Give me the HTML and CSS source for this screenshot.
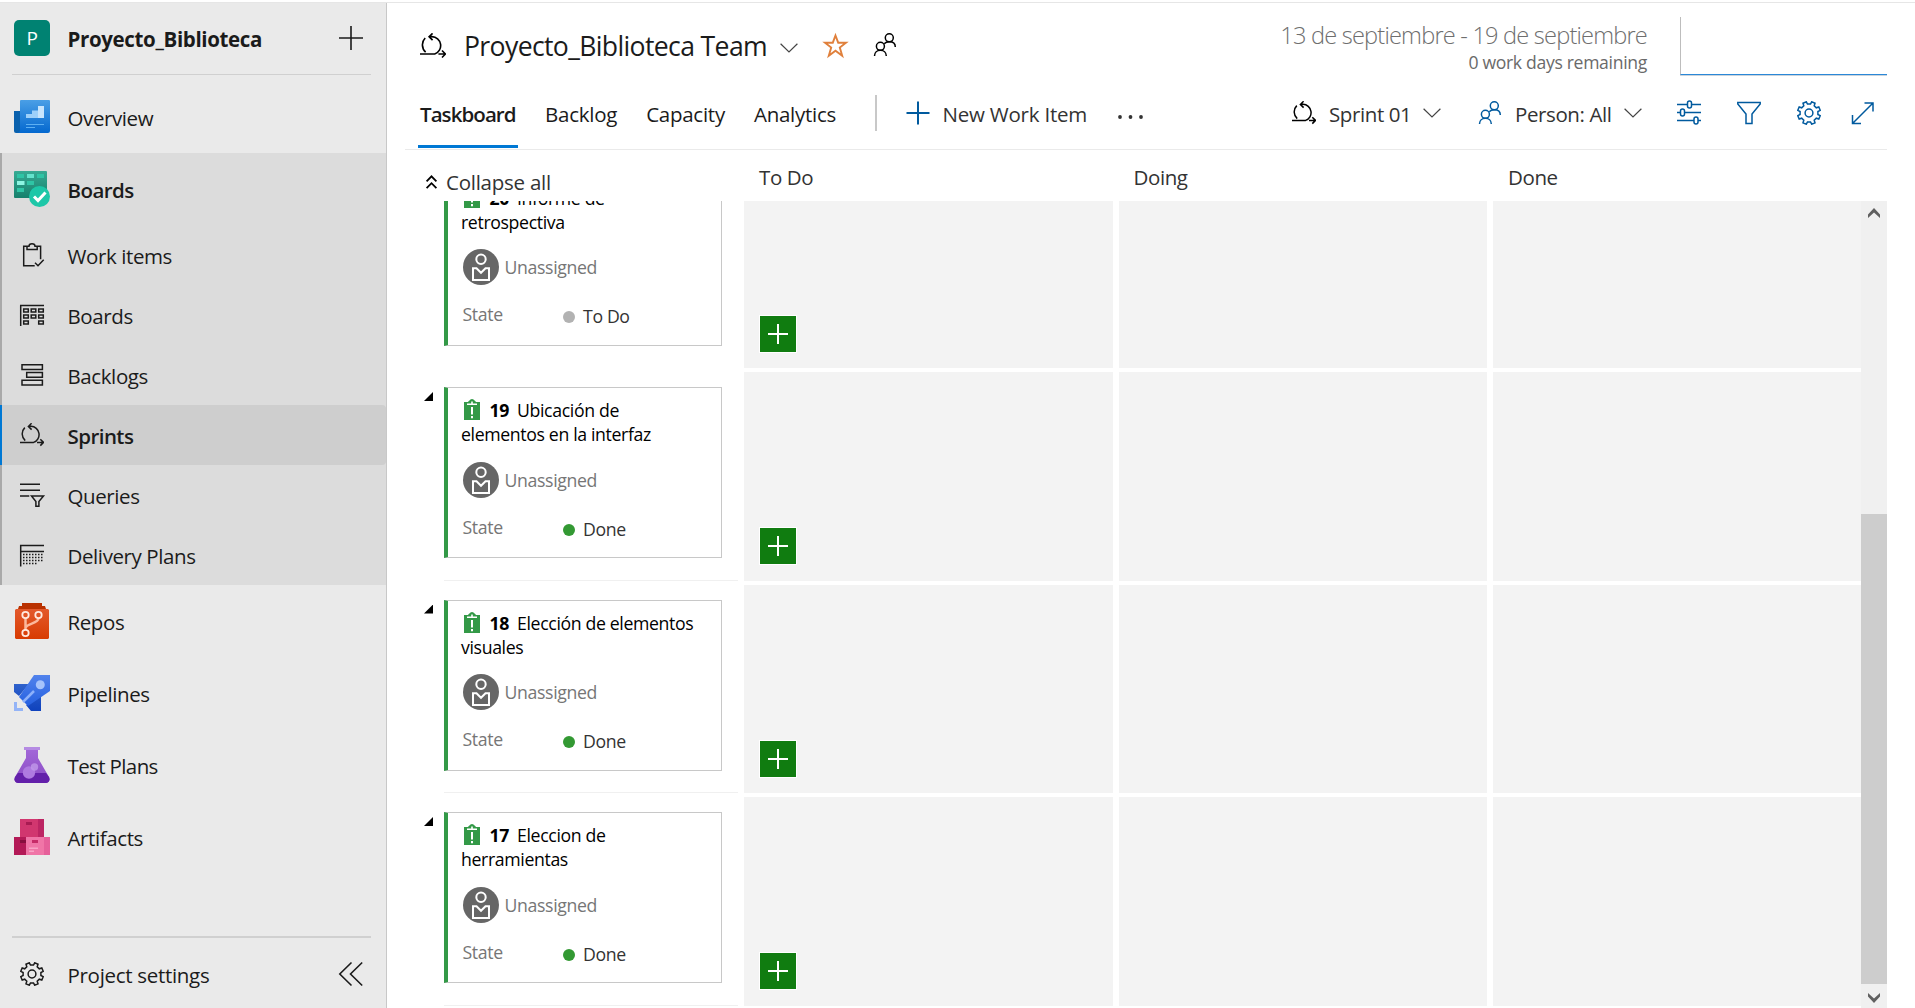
FILE: index.html
```html
<!DOCTYPE html>
<html lang="es">
<head>
<meta charset="utf-8">
<title>Proyecto_Biblioteca Team Taskboard</title>
<link rel="stylesheet" href="styles.css">
</head>
<body>
<svg class="defs" aria-hidden="true">
  <defs>
    <symbol id="i-sprint" viewBox="0 0 24 24"><path d="M4.8 4.6A9 9 0 0 0 5.2 17.6M8.6 3.3H11A8.3 8.3 0 0 1 13.6 19.4H0M11.6.3 8.4 3.4l3.2 3.2M17 19.4h6.3M20.3 16.2l3.2 3.2-3.2 3.2"/></symbol>
    <symbol id="i-people" viewBox="0 0 24 24"><circle cx="16.3" cy="4.8" r="4"/><circle cx="7.4" cy="13.3" r="4"/><path d="M1.5 23c0-3.6 2.7-5.7 5.9-5.7s5.9 2.1 5.9 5.7M11.2 10.8c1.2-1.3 2.9-2 5.1-2 3.500 0 6 2 6 5.200"/></symbol>
    <symbol id="i-gear" viewBox="0 0 24 24"><path d="M20.9 13.500 23.200 14.700 21.800 18 19.300 17.200 17.200 19.300 18 21.800 14.700 23.200 13.500 20.900 10.500 20.900 9.300 23.200 6 21.800 6.800 19.300 4.700 17.200 2.200 18 .8 14.700 3.100 13.500 3.100 10.500 .8 9.300 2.200 6 4.700 6.800 6.800 4.700 6 2.200 9.300 .8 10.500 3.100 13.500 3.100 14.700 .8 18 2.200 17.200 4.700 19.300 6.800 21.800 6 23.200 9.300 20.900 10.500Z"/><circle cx="12" cy="12" r="3.900"/></symbol>
    <symbol id="i-chevron" viewBox="0 0 18 10"><path d="m.6.8 8.400 8.200L17.400.8"/></symbol>
    <symbol id="i-task" viewBox="0 0 16 21"><path fill="#339947" stroke="none" d="M0 3h16v18H0z"/><path fill="#339947" stroke="none" d="M4 3.500C4 2 5 2 5.500 1.500S6.800 0 8 0s2 1 2.500 1.500S12 2 12 3.500z"/><path stroke="#fff" stroke-width="1.600" d="M3 5.200h10M8 2.500v2.500"/><path stroke="#fff" stroke-width="2" d="M8 8v7.500M8 17v2.200"/></symbol>
    <symbol id="i-person" viewBox="0 0 36 36"><circle cx="18" cy="18" r="18" fill="#666" stroke="none"/><g fill="none" stroke="#fff" stroke-width="2"><circle cx="18" cy="10.300" r="4.700"/><path d="M10 31V19.200h3.500l4.500 4.600 4.500-4.600H26V31z"/></g></symbol>
    <linearGradient id="g-ov" x2="0" y2="1"><stop stop-color="#4a9fe6"/><stop offset="1" stop-color="#0468cf"/></linearGradient>
    <linearGradient id="g-bd" x2="0" y2="1"><stop stop-color="#37ab94"/><stop offset="1" stop-color="#16806c"/></linearGradient>
    <linearGradient id="g-rp" x2="0" y2="1"><stop stop-color="#e3592c"/><stop offset="1" stop-color="#d83b01"/></linearGradient>
    <linearGradient id="g-pp" x2="0" y2="1"><stop stop-color="#5283ec"/><stop offset="1" stop-color="#2560e0"/></linearGradient>
    <linearGradient id="g-pd" x2="0" y2="1"><stop stop-color="#2f62cc"/><stop offset="1" stop-color="#0f42bd"/></linearGradient>
    <linearGradient id="g-tp" x2="0" y2="1"><stop stop-color="#a267d8"/><stop offset="1" stop-color="#8a4cc4"/></linearGradient>
  </defs>
</svg>

<div class="app">
  <nav class="sidebar">
    <header class="project">
      <span class="badge">P</span>
      <span class="label bold">Proyecto_Biblioteca</span>
      <svg class="icon i24 add" viewBox="0 0 24 24"><path d="M0 12h24M12 0v24"/></svg>
    </header>

    <a class="hub overview">
      <svg class="i36" viewBox="0 0 36 36"><path fill="#0a61ad" d="M0 12h7v22H2a2 2 0 0 1-2-2z"/><path fill="url(#g-ov)" d="M7 1h28a1 1 0 0 1 1 1v30a2 2 0 0 1-2 2H2c3 0 4-1 4-3V2a1 1 0 0 1 1-1z"/><path fill="#9dd0fa" d="M12 15h6v-3.500h6V19H12z"/><path fill="#c8e5fd" d="M24 7h6v12h-6z"/><path fill="#5db0f3" d="M12 25h18v1H12zM12 28h9v1h-9z"/></svg>
      <span class="label">Overview</span>
    </a>

    <section class="group">
      <a class="hub">
        <svg class="i36" viewBox="0 0 36 36"><rect width="33" height="27" rx="1" fill="url(#g-bd)"/><path fill="#2fc4a5" d="M3 3h7v4H3zM23 3h7v4h-7zM13 10h7v4h-7zM3 17h7v4H3z"/><path fill="#63e3cc" d="M13 3h7v4h-7z"/><path fill="#8df5e2" d="M3 10h7.500v4H3z"/><circle cx="25.500" cy="25.500" r="10.500" fill="#1dc7a8"/><path fill="none" stroke="#fff" stroke-width="3" d="m20 25.500 4 4 7.500-8"/></svg>
        <span class="label semi">Boards</span>
      </a>
      <a class="item">
        <svg class="icon i24" viewBox="0 0 24 24"><path d="M7 3.200H3.700v19.500h11M17 3.200h3.600v13M7 3.200h2C9 1.500 10.200.8 12 .8s3 .7 3 2.400h2.200v3.300H7zM15 19.800l3 3 5.700-6"/></svg>
        <span class="label">Work items</span>
      </a>
      <a class="item">
        <svg class="icon i24" viewBox="0 0 24 24"><path d="M0 2.500h24M.7 2.500V23M3.700 6h4.600v3H3.700zM11.200 6h4.600v3h-4.600zM18.700 6h4.600v3h-4.600zM3.700 12h4.600v3H3.700zM11.200 12h4.600v3h-4.600zM18.700 12h4.600v3h-4.600zM3.700 18h4.600v3H3.700zM18.700 18h4.600v3h-4.600z"/></svg>
        <span class="label">Boards</span>
      </a>
      <a class="item">
        <svg class="icon i24" viewBox="0 0 24 24"><path d="M2 1.700h20.400V6.500H2zM6.700 9.500h15.700v4.800H6.700zM2 17.200h20.400V22H2z"/></svg>
        <span class="label">Backlogs</span>
      </a>
      <a class="item active">
        <svg class="icon i24"><use href="#i-sprint"/></svg>
        <span class="label semi">Sprints</span>
      </a>
      <a class="item">
        <svg class="icon i24" viewBox="0 0 24 24"><path d="M0 1.200h20M0 7.200h20M0 13h9.300M11.500 13h12l-4.600 5.500v4.800h-3v-4.800z"/></svg>
        <span class="label">Queries</span>
      </a>
      <a class="item">
        <svg class="icon i24" viewBox="0 0 24 24"><path d="M.7 23.500V2.500H24M.7 8.500H24"/><path stroke-dasharray="1.500 1.500" d="M3 11.500h20M3 14.500h20M3 17.500h20M3 20.500h14"/></svg>
        <span class="label">Delivery Plans</span>
      </a>
    </section>

    <a class="hub">
      <svg class="i36" viewBox="0 0 36 36"><path fill="#b93100" d="M8 0h20v3h3l1 3H4l1-3h3z"/><path fill="url(#g-rp)" d="M2 6h32l1 1v28l-1 1H2l-1-1V7z"/><g fill="none" stroke-width="2.500"><path stroke="#fbb89c" d="M11.500 15v12M24.500 15c0 6-12 5-13 10"/><g stroke="#ffe9df" stroke-width="1.800"><circle cx="11.500" cy="12" r="3.200"/><circle cx="24.500" cy="12" r="3.200"/><circle cx="11.500" cy="30" r="3.200"/></g></g></svg>
      <span class="label">Repos</span>
    </a>
    <a class="hub">
      <svg class="i36" viewBox="0 0 36 36"><path fill="url(#g-pd)" d="M0 9h15L5 21l-5-4zM27 20v16H17l-5-6z"/><path fill="#94b4f7" d="M0 27h3v6h6v3H0z"/><path fill="url(#g-pp)" d="M20 0h16v16L14 31 5 22z"/><circle cx="26.300" cy="9.700" r="4.500" fill="#a6c3fb"/><path stroke="#8db1fa" stroke-width="2.500" d="M20 16 9 27"/></svg>
      <span class="label">Pipelines</span>
    </a>
    <a class="hub">
      <svg class="i36" viewBox="0 0 36 36"><path fill="url(#g-tp)" d="M12 2h12v9l11 19c1 3 0 6-3 6H4c-3 0-4-3-3-6l11-19z"/><path fill="#6320aa" d="M4 26h28l3 4c1.500 3 0 6-3 6H4c-3 0-4.500-3-3-6z"/><path fill="#b58be3" d="M10 0h16v3H10z"/><circle cx="15" cy="25.500" r="6.200" fill="#ae7ae0"/><circle cx="20.500" cy="20" r="3.700" fill="#c198ea" opacity=".8"/></svg>
      <span class="label tight">Test Plans</span>
    </a>
    <a class="hub">
      <svg class="i36" viewBox="0 0 36 36"><path fill="#d1366f" d="M6 0h18v18H6z"/><path fill="#bc2563" d="M24 0h6v18h-6z"/><path fill="#b31a57" d="M0 18h12v18H0z"/><path fill="#f075a7" d="M12 18h18v18H12z"/><path fill="#e6609a" d="M30 18h6v18h-6z"/><path fill="#a81b52" d="M12 3h6v3h-6z"/><path fill="#860f3e" d="M6 21h6v3H6z"/><path fill="#c62c68" d="M18 21h6v3h-6z"/><path fill="#f9a3c6" d="M15 28.500h9V30h-9zM15 31.500h5V33h-5z"/></svg>
      <span class="label">Artifacts</span>
    </a>

    <footer class="settings">
      <svg class="icon i24"><use href="#i-gear"/></svg>
      <span class="label">Project settings</span>
      <svg class="icon i24 collapse" viewBox="0 0 24 24"><path d="M12.500.5.800 12l11.700 11.500M23.200.5 11.500 12l11.700 11.500"/></svg>
    </footer>
  </nav>

  <main class="main">
    <header class="top">
      <svg class="icon sprint"><use href="#i-sprint"/></svg>
      <h1>Proyecto_Biblioteca Team</h1>
      <svg class="icon chev"><use href="#i-chevron"/></svg>
      <svg class="icon star" viewBox="0 0 25 25"><path d="m12.500 2.500 2.700 7.200H23l-6.200 4.900 2.400 8.200-6.700-5-6.700 5 2.400-8.200L2 9.700h7.800z"/></svg>
      <svg class="icon i24 team"><use href="#i-people"/></svg>
      <div class="dates">
        <div class="range">13 de septiembre - 19 de septiembre</div>
        <div class="remaining">0 work days remaining</div>
      </div>
      <div class="burndown"></div>
    </header>

    <div class="toolbar">
      <div class="tabs">
        <a class="tab current">Taskboard</a><a class="tab">Backlog</a><a class="tab">Capacity</a><a class="tab">Analytics</a>
      </div>
      <div class="newitem">
        <svg class="icon blue" width="24" height="24" viewBox="0 0 24 24"><path stroke-width="2" d="M.5 12h23M12 .5v23"/></svg>
        <span>New Work Item</span>
      </div>
      <svg class="dots" viewBox="0 0 26 4"><circle cx="2" cy="2" r="1.900"/><circle cx="12.500" cy="2" r="1.900"/><circle cx="23" cy="2" r="1.900"/></svg>
      <div class="filters">
        <svg class="icon i24"><use href="#i-sprint"/></svg>
        <span class="pick sprintpick">Sprint 01</span>
        <svg class="icon chev"><use href="#i-chevron"/></svg>
        <svg class="icon i24 blue person"><use href="#i-people"/></svg>
        <span class="pick personpick">Person: All</span>
        <svg class="icon chev"><use href="#i-chevron"/></svg>
        <svg class="icon i24 blue sliders" viewBox="0 0 24 24"><path d="M0 3.500h10.500M14.500 3.500H24M0 11.500h3.500M7.500 11.500H24M0 19.500h17M21 19.500h3M10.500 2a2 2 0 0 1 4 0v3a2 2 0 0 1-4 0zM3.500 10a2 2 0 0 1 4 0v3a2 2 0 0 1-4 0zM17 18a2 2 0 0 1 4 0v3a2 2 0 0 1-4 0z"/></svg>
        <svg class="icon i24 blue funnel" viewBox="0 0 24 24"><path d="M.8 1.500h22.400V3L15 13v9.500H9V13L.8 3z"/></svg>
        <svg class="icon i24 blue gear"><use href="#i-gear"/></svg>
        <svg class="icon i24 blue expand" viewBox="0 0 24 24"><path d="M1.500 22.500 22 2M13.500 2H22v8.500M1.500 14v8.500H10"/></svg>
      </div>
    </div>

    <div class="columns">
      <div class="collapseall">
        <svg class="icon" width="11" height="14" viewBox="0 0 11 14"><path stroke-width="1.800" d="m.6 6.400 4.900-5 4.900 5M.6 13.200l4.900-5 4.900 5"/></svg>
        <span>Collapse all</span>
      </div>
      <span>To Do</span><span>Doing</span><span>Done</span>
    </div>

    <div class="viewport">
      <div class="rows">
        <div class="row first">
          <div class="parent">
            <i class="toggle"></i>
            <article class="card">
              <h2><svg><use href="#i-task"/></svg><b>20</b>Informe de<br>retrospectiva</h2>
              <div class="who"><svg><use href="#i-person"/></svg>Unassigned</div>
              <div class="state"><span>State</span><i class="dot todo"></i><em>To Do</em></div>
            </article>
          </div>
          <div class="cell"><button class="add-task"></button></div><div class="cell"></div><div class="cell"></div>
        </div>
        <div class="row">
          <div class="parent">
            <i class="toggle"></i>
            <article class="card">
              <h2><svg><use href="#i-task"/></svg><b>19</b>Ubicación de<br>elementos en la interfaz</h2>
              <div class="who"><svg><use href="#i-person"/></svg>Unassigned</div>
              <div class="state"><span>State</span><i class="dot"></i><em>Done</em></div>
            </article>
          </div>
          <div class="cell"><button class="add-task"></button></div><div class="cell"></div><div class="cell"></div>
        </div>
        <div class="row">
          <div class="parent">
            <i class="toggle"></i>
            <article class="card">
              <h2><svg><use href="#i-task"/></svg><b>18</b>Elección de elementos<br>visuales</h2>
              <div class="who"><svg><use href="#i-person"/></svg>Unassigned</div>
              <div class="state"><span>State</span><i class="dot"></i><em>Done</em></div>
            </article>
          </div>
          <div class="cell"><button class="add-task"></button></div><div class="cell"></div><div class="cell"></div>
        </div>
        <div class="row">
          <div class="parent">
            <i class="toggle"></i>
            <article class="card">
              <h2><svg><use href="#i-task"/></svg><b>17</b>Eleccion de<br>herramientas</h2>
              <div class="who"><svg><use href="#i-person"/></svg>Unassigned</div>
              <div class="state"><span>State</span><i class="dot"></i><em>Done</em></div>
            </article>
          </div>
          <div class="cell"><button class="add-task"></button></div><div class="cell"></div><div class="cell"></div>
        </div>
      </div>
      <div class="scrollbar">
        <svg viewBox="0 0 12 10"><path d="M0 6.500 6 0l6 6.500V10L6 4.500 0 10z"/></svg>
        <div class="thumb"></div>
        <svg viewBox="0 0 12 10"><path d="M0 3.500 6 10l6-6.500V0L6 5.500 0 0z"/></svg>
      </div>
    </div>
  </main>
</div>
</body>
</html>
```
FILE: styles.css
```css
* { box-sizing: border-box; }

body {
  margin: 0;
  padding-top: 2px;
  height: 1008px;
  overflow: hidden;
  background: #fff;
  color: #1b1b1b;
  font-family: "Open Sans", "Noto Sans", sans-serif;
  font-size: 20.5px;
  letter-spacing: -0.4px;
  white-space: nowrap;
}

.defs { display: block; width: 0; height: 0; position: absolute; }
svg { display: block; flex: none; }
.icon { fill: none; stroke: currentColor; stroke-width: 1.5; overflow: visible; }
.i24 { width: 24px; height: 24px; }
.i36 { width: 36px; height: 36px; }
.blue { color: #005a9e; }

.app { display: flex; height: 1006px; border-top: 1px solid #e6e6e6; }

/* Sidebar */
.sidebar {
  flex: none;
  display: flex;
  flex-direction: column;
  width: 387px;
  background: #eaeaea;
  border-right: 1px solid #c8c8c8;
}
.label { line-height: 28px; padding-top: 1px; margin-left: 17.5px; }
.bold { font-weight: 700; letter-spacing: -0.36px; }
.semi { font-weight: 600; letter-spacing: -0.55px; }
.tight { letter-spacing: -0.62px; }

.project {
  display: flex;
  align-items: center;
  height: 72px;
  margin: 0 15px 0 12px;
  padding: 0 8px 2px 2px;
  border-bottom: 1px solid #d0d0d0;
}
.project .label { padding-top: 2px; }
.badge {
  display: flex;
  align-items: center;
  justify-content: center;
  width: 36px;
  height: 36px;
  border-radius: 5px;
  background: #008272;
  color: #fff;
  font-size: 19px;
}
.add, .collapse { margin-left: auto; stroke-width: 1.6; }

.hub { display: flex; align-items: center; height: 72px; padding-left: 14px; flex: none; }
.overview { margin-top: 6px; }
.group { background: #dcdcdc; border-left: 2px solid #a9a9a9; flex: none; }
.group .hub { padding-left: 12px; }
.item { display: flex; align-items: center; height: 60px; padding-left: 18px; }
.item .label { margin-left: 23.5px; }
.active {
  margin-left: -2px;
  padding-left: 18px;
  background: #cecece;
  border-left: 2px solid #0078d4;
  border-radius: 0 4px 4px 0;
}
.settings {
  display: flex;
  align-items: center;
  height: 72px;
  margin: auto 15px 0 12px;
  padding: 2px 8px 0;
  border-top: 2px solid #d0d0d0;
}
.settings .label { margin-left: 23.5px; letter-spacing: -0.3px; }

/* Header */
.main { flex: 1; min-width: 0; display: flex; flex-direction: column; padding-right: 28px; }
.top { display: flex; height: 83px; flex: none; padding-left: 33px; }
.sprint { width: 26px; height: 26px; margin-top: 30px; color: #000; }
h1 {
  margin: 25px 0 0;
  padding-left: 18px;
  width: 340px;
  font-size: 26.6px;
  font-weight: 400;
  line-height: 36px;
  letter-spacing: -0.64px;
}
.chev { width: 18px; height: 10px; stroke-width: 1.2; color: #444; }
.top .chev { margin-top: 40px; margin-left: -6px; }
.star { width: 25px; height: 25px; margin: 30px 0 0 25px; color: #e0803c; stroke-width: 1.9; }
.team { margin: 30px 0 0 25px; color: #000; }
.dates { margin-left: auto; text-align: right; }
.range { margin-top: 15px; font-size: 23.6px; font-weight: 300; line-height: 34px; letter-spacing: -0.8px; color: #6e6e6e; }
.remaining { margin-top: -2px; font-size: 17.6px; line-height: 24px; letter-spacing: -0.32px; color: #6a6a6a; }
.burndown {
  width: 207px;
  height: 58px;
  margin: 14px 0 0 33px;
  border-left: 1px solid #bdbdbd;
  border-bottom: 1px solid #2b88d8;
  box-shadow: 0 1px 0 #c9d3dc;
}

/* Toolbar */
.toolbar {
  display: flex;
  align-items: center;
  height: 64px;
  flex: none;
  margin-left: 18px;
  border-bottom: 1px solid #eaeaea;
  color: #333;
}
.tabs { display: flex; height: 63px; padding-left: 13px; width: 470px; }
.tab { margin-left: 29px; color: #1b1b1b; line-height: 28px; padding-top: 14px; height: 62px; letter-spacing: -0.25px; }
.current { width: 100px; margin: 0 -2px 0 0; padding-left: 2px; font-weight: 600; letter-spacing: -0.93px; box-shadow: inset 0 -3px #0078d4; }
.newitem {
  display: flex;
  align-items: center;
  height: 36px;
  margin-top: -9px;
  padding-left: 29px;
  gap: 12.5px;
  border-left: 2px solid #c8c8c8;
  line-height: 28px;
  letter-spacing: -0.22px;
}
.newitem span { padding-top: 1px; }
.dots { width: 26px; height: 4px; margin: -2px 0 0 31px; fill: #333; }
.filters { display: flex; align-items: center; margin-left: auto; margin-top: -9px; padding-right: 12px; }
.filters > .icon:first-child { color: #000; }
.pick { line-height: 28px; padding-top: 2px; }
.sprintpick { width: 83px; margin-left: 13px; }
.personpick { width: 98px; margin-left: 13px; }
.filters .chev { margin-left: 11px; }
.person { margin-left: 37px; }
.sliders { margin-left: 35px; }
.funnel, .gear { margin-left: 36px; }
.expand { margin-left: 30px; }

/* Board */
.columns {
  display: grid;
  grid-template-columns: 367px repeat(3, 374.5px);
  height: 51px;
  flex: none;
  align-items: start;
  padding: 13px 0 0 5px;
  line-height: 28px;
  color: #333;
}
.collapseall { display: flex; align-items: center; gap: 9px; padding: 5px 0 0 34px; letter-spacing: -0.25px; }
.collapseall svg { color: #000; }
.viewport { flex: 1; display: flex; overflow: hidden; min-height: 0; }
.rows { flex: 1; margin-top: -41.5px; }
.row {
  display: grid;
  grid-template-columns: 351px 369px 368px 368px;
  column-gap: 6px;
  height: 208.5px;
  margin-bottom: 4px;
}
.parent {
  display: flex;
  align-items: flex-start;
  padding: 15px 0 0 37px;
  background: linear-gradient(#f0f0f0, #f0f0f0) 57px 100% / 294px 1px no-repeat;
}
.first .parent { background: none; }
.cell { background: #f3f3f3; padding: 156px 0 0 16px; }
.add-task {
  display: block;
  width: 36px;
  height: 36px;
  padding: 0;
  border: 0;
  outline: 1px solid #fff;
  background:
    linear-gradient(#fff, #fff) center / 20px 2px no-repeat,
    linear-gradient(#fff, #fff) center / 2px 20px no-repeat,
    #107c10;
}
.toggle {
  width: 9px;
  height: 9px;
  margin: 5px 11px 0 0;
  background: #000;
  clip-path: polygon(100% 0, 100% 100%, 0 100%);
}
.card {
  width: 278px;
  height: 171px;
  padding: 10px 0 0 13px;
  border: 1px solid #c8c8c8;
  border-left: 4px solid #339947;
  font-size: 17.7px;
  letter-spacing: -0.36px;
}
h2 { margin: 0; font-size: inherit; font-weight: 400; line-height: 24px; color: #000; }
h2 svg { display: inline-block; width: 16px; height: 21px; margin: 0 10px 0 2.5px; vertical-align: -3px; }
h2 b { margin-right: 8px; }
.who { display: flex; align-items: center; gap: 5.5px; margin: 15.5px 0 0 2px; line-height: 24px; color: #767676; }
.who svg { width: 36px; height: 36px; }
.state { display: flex; align-items: center; margin: 19px 0 0 1.5px; line-height: 24px; color: #767676; }
.state span { width: 100px; margin-top: -4px; }
.dot { width: 12px; height: 12px; margin-top: 2px; border-radius: 50%; background: #393; }
.todo { background: #b2b2b2; }
.state em { margin-left: 8.5px; font-style: normal; color: #333; }

.scrollbar {
  display: flex;
  flex-direction: column;
  align-items: center;
  width: 26px;
  padding: 7px 0 5px;
  background: #f0f0f0;
}
.scrollbar svg { width: 12px; height: 10px; fill: #606060; }
.thumb { width: 26px; height: 470px; margin: auto 0 9px; background: #cdcdcd; }
```
